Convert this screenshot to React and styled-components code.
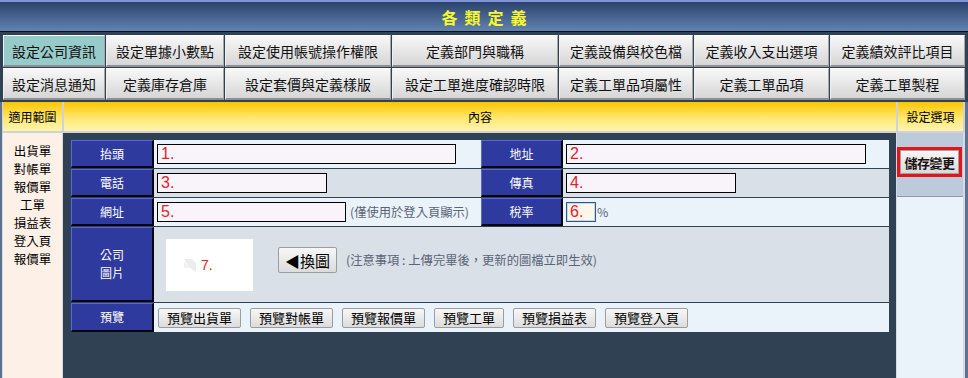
import React from 'react'
import styled, { createGlobalStyle } from 'styled-components'

const GlobalStyle = createGlobalStyle`
  html, body {
    margin: 0;
    padding: 0;
    background: #2f4152;
  }
  body {
    font-family: "Noto Sans CJK TC", "Noto Sans", sans-serif;
  }
  * { box-sizing: border-box; }
`

// 整體外框
const Page = styled.div`
  width: 968px;
  height: 378px;
  overflow: hidden;
  background: #2f4152;
  display: flex;
  flex-direction: column;
`

const TitleBar = styled.div`
  height: 32px;
  border-top: 2px solid #8093d8;
  border-bottom: 1px solid #0b1018;
  background: linear-gradient(#2a436c, #6282b0);
  display: flex;
  align-items: center;
  justify-content: center;
`

const Title = styled.h1`
  margin: 0;
  padding-left: 7px;
  font-size: 16px;
  font-weight: bold;
  letter-spacing: 7px;
  color: #f8f82a;
  line-height: 1;
`

const NavGrid = styled.div`
  display: grid;
  grid-template-columns: 102px 118px 166px 166px 134px 135px 135px;
  grid-auto-rows: 32px;
  gap: 1px;
  padding: 3px 3px 0 3px;
`

const NavButton = styled.div`
  display: flex;
  align-items: center;
  justify-content: center;
  font-size: 14px;
  color: #111;
  border-top: 1px solid #fafafa;
  border-left: 1px solid #f0f0f0;
  border-right: 1px solid #a8a8a8;
  border-bottom: 2px solid #8f8f8f;
  background: ${(p) => (p.$active ? '#97cbca' : 'linear-gradient(#f8f8f8, #d6d6d6)')};
`

const HeaderRow = styled.div`
  margin-top: 2px;
  display: grid;
  grid-template-columns: 59px 832px 65px;
  column-gap: 2px;
  height: 31px;
  padding: 0 2px 2px 1px;
  background: #cfd3d6;
  border-left: 2px solid #5d7292;
  border-right: 3px solid #5d7292;
`

const HeaderCell = styled.div`
  display: flex;
  align-items: center;
  justify-content: center;
  font-size: 12px;
  color: #000;
  background: linear-gradient(#fbc500, #ffe870 55%, #fff3b0);
`

const Body = styled.div`
  flex: 1;
  display: grid;
  grid-template-columns: 59px 833px 66px;
  column-gap: 1px;
  padding: 0 2px 0 1px;
  background: #d5dae0;
  border-left: 2px solid #5d7292;
  border-right: 3px solid #5d7292;
`

const ScopeList = styled.div`
  background: #fdf0e6;
  padding-top: 9px;
  font-size: 12.5px;
  line-height: 18px;
  text-align: center;
  color: #000;
`

const Content = styled.div`
  background: #2f4152;
  padding: 7px 7px 7px 8px;
`

const FormTable = styled.div`
  width: 818px;
  display: grid;
  grid-template-columns: 83px 327px 82px 326px;
  grid-template-rows: 28px 28px 28px 75px 29px;
  row-gap: 1px;
  background: #2f4152;
`

const Label = styled.div`
  display: flex;
  align-items: center;
  justify-content: center;
  text-align: center;
  font-size: 12px;
  line-height: 18px;
  color: #fff;
  background: #2e3a9e;
  border-top: 1px solid #5566ec;
  border-left: 1px solid #5566ec;
  border-right: 2px solid #05060c;
  border-bottom: 2px solid #05060c;
`

const Cell = styled.div`
  display: flex;
  align-items: center;
  padding-left: 3px;
  background: ${(p) => (p.$alt ? '#d9e0e7' : '#ebf3fa')};
  grid-column: ${(p) => (p.$span ? `span ${p.$span}` : 'auto')};
`

const Field = styled.input`
  width: ${(p) => p.$w}px;
  height: 20px;
  padding: 0 3px;
  border: 1px solid ${(p) => (p.$focus ? '#33558f' : '#000')};
  background: ${(p) => (p.$focus ? '#fdf7e9' : '#f9f3fa')};
  box-shadow: ${(p) => (p.$focus ? 'inset 0 0 0 1px #c8d6ec' : 'none')};
  font-family: "Liberation Sans", Arial, sans-serif;
  font-size: 16px;
  color: #e5202c;
  outline: none;
`

const Hint = styled.span`
  margin-left: ${(p) => p.$gap || 4}px;
  font-size: 12.3px;
  color: #5a6478;
  white-space: nowrap;
`

const PhotoCell = styled(Cell)`
  padding-left: 12px;
`

const ImageBox = styled.div`
  width: 87px;
  height: 52px;
  background: #fff;
  display: flex;
  align-items: center;
  padding-left: 17px;
  gap: 4px;
`

const PhotoNum = styled.span`
  font-family: "Liberation Sans", Arial, sans-serif;
  font-size: 14px;
  color: #e5202c;
`

const UploadGroup = styled.div`
  display: flex;
  align-items: center;
  margin-left: 25px;
  margin-bottom: 9px;
`

const GrayButton = styled.button`
  height: ${(p) => p.$h || 20}px;
  padding: 0 ${(p) => p.$pad || 8}px;
  border: 1px solid #9c9c9c;
  border-radius: 2px;
  background: linear-gradient(#f7f7f7, #dcdcdc);
  font-family: "Noto Sans CJK TC", "Noto Sans", sans-serif;
  font-size: ${(p) => p.$size || 13}px;
  color: #000;
  line-height: 1;
  white-space: nowrap;
`

const PreviewCell = styled(Cell)`
  padding-left: 4px;
  gap: 9px;
`

const OptionCol = styled.div`
  background: #ebf3fa;
  display: flex;
  flex-direction: column;
`

const OptionTop = styled.div`
  height: 64px;
  background: #bccadb;
  border-bottom: 1px solid #8a9aae;
  padding-top: 14px;
`

const SaveFrame = styled.div`
  width: 65px;
  height: 30px;
  border: 3px solid #e3141b;
  display: flex;
`

const SaveButton = styled.button`
  flex: 1;
  padding: 0;
  border: 1px solid #a0a0a0;
  background: linear-gradient(#f6f6f6, #dadada);
  font-family: "Noto Sans CJK TC", "Noto Sans", sans-serif;
  font-size: 13px;
  font-weight: bold;
  letter-spacing: -0.5px;
  color: #1a1010;
`

const navItems = [
  '設定公司資訊', '設定單據小數點', '設定使用帳號操作權限', '定義部門與職稱',
  '定義設備與校色檔', '定義收入支出選項', '定義績效評比項目',
  '設定消息通知', '定義庫存倉庫', '設定套價與定義樣版', '設定工單進度確認時限',
  '定義工單品項屬性', '定義工單品項', '定義工單製程',
]

const scopes = ['出貨單', '對帳單', '報價單', '工單', '損益表', '登入頁', '報價單']

const previews = ['預覽出貨單', '預覽對帳單', '預覽報價單', '預覽工單', '預覽損益表', '預覽登入頁']

const BrokenImage = () => (
  <svg width="14" height="20" viewBox="0 0 14 20">
    <path d="M1 4 L9 4 L13 8 L13 17 L6 12 Z" fill="#ececec" />
    <path d="M1 6 L7 13 L1 13 Z" fill="#f2f2f2" />
  </svg>
)

export default function App() {
  return (
    <Page>
      <GlobalStyle />
      <TitleBar>
        <Title>各類定義</Title>
      </TitleBar>

      <NavGrid>
        {navItems.map((name, i) => (
          <NavButton key={name + i} $active={i === 0}>
            {name}
          </NavButton>
        ))}
      </NavGrid>

      <HeaderRow>
        <HeaderCell>適用範圍</HeaderCell>
        <HeaderCell>內容</HeaderCell>
        <HeaderCell>設定選項</HeaderCell>
      </HeaderRow>

      <Body>
        <ScopeList>
          {scopes.map((s, i) => (
            <div key={i}>{s}</div>
          ))}
        </ScopeList>

        <Content>
          <FormTable>
            <Label>抬頭</Label>
            <Cell>
              <Field $w={299} defaultValue="1." />
            </Cell>
            <Label>地址</Label>
            <Cell>
              <Field $w={300} defaultValue="2." />
            </Cell>

            <Label>電話</Label>
            <Cell $alt>
              <Field $w={170} defaultValue="3." />
            </Cell>
            <Label>傳真</Label>
            <Cell $alt>
              <Field $w={170} defaultValue="4." />
            </Cell>

            <Label>網址</Label>
            <Cell>
              <Field $w={189} defaultValue="5." />
              <Hint>(僅使用於登入頁顯示)</Hint>
            </Cell>
            <Label>稅率</Label>
            <Cell>
              <Field $w={30} $focus defaultValue="6." />
              <Hint $gap={1}>%</Hint>
            </Cell>

            <Label>
              公司
              <br />
              圖片
            </Label>
            <PhotoCell $alt $span={3}>
              <ImageBox>
                <BrokenImage />
                <PhotoNum>7.</PhotoNum>
              </ImageBox>
              <UploadGroup>
                <GrayButton $h={26} $pad={6} $size={15}>◀換圖</GrayButton>
                <Hint $gap={9}>(注意事項 : 上傳完畢後，更新的圖檔立即生效)</Hint>
              </UploadGroup>
            </PhotoCell>

            <Label>預覽</Label>
            <PreviewCell $span={3}>
              {previews.map((p) => (
                <GrayButton key={p}>{p}</GrayButton>
              ))}
            </PreviewCell>
          </FormTable>
        </Content>

        <OptionCol>
          <OptionTop>
            <SaveFrame>
              <SaveButton>儲存變更</SaveButton>
            </SaveFrame>
          </OptionTop>
        </OptionCol>
      </Body>
    </Page>
  )
}
